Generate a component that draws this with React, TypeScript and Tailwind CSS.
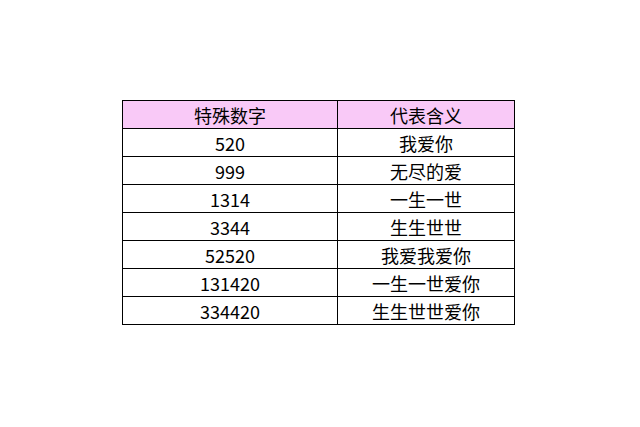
import React from 'react'

const rows: [string, string][] = [
  ['520', '我爱你'],
  ['999', '无尽的爱'],
  ['1314', '一生一世'],
  ['3344', '生生世世'],
  ['52520', '我爱我爱你'],
  ['131420', '一生一世爱你'],
  ['334420', '生生世世爱你'],
]

const font = { fontFamily: '"Noto Sans CJK SC", "Noto Sans", sans-serif' }

export default function App() {
  return (
    <div className="w-[640px] h-[427px] bg-white pt-[100px] pl-[122px]" style={font}>
      <div className="w-[393px] border border-black text-[18px] leading-none text-black">
        <div className="flex h-[27px] bg-[#f9c9f7]">
          <div className="w-[215px] border-r border-black flex items-center justify-center">特殊数字</div>
          <div className="flex-1 flex items-center justify-center">代表含义</div>
        </div>
        {rows.map(([num, meaning]) => (
          <div key={num} className="flex h-[28px] border-t border-black">
            <div className="w-[215px] border-r border-black flex items-center justify-center">{num}</div>
            <div className="flex-1 flex items-center justify-center">{meaning}</div>
          </div>
        ))}
      </div>
    </div>
  )
}
